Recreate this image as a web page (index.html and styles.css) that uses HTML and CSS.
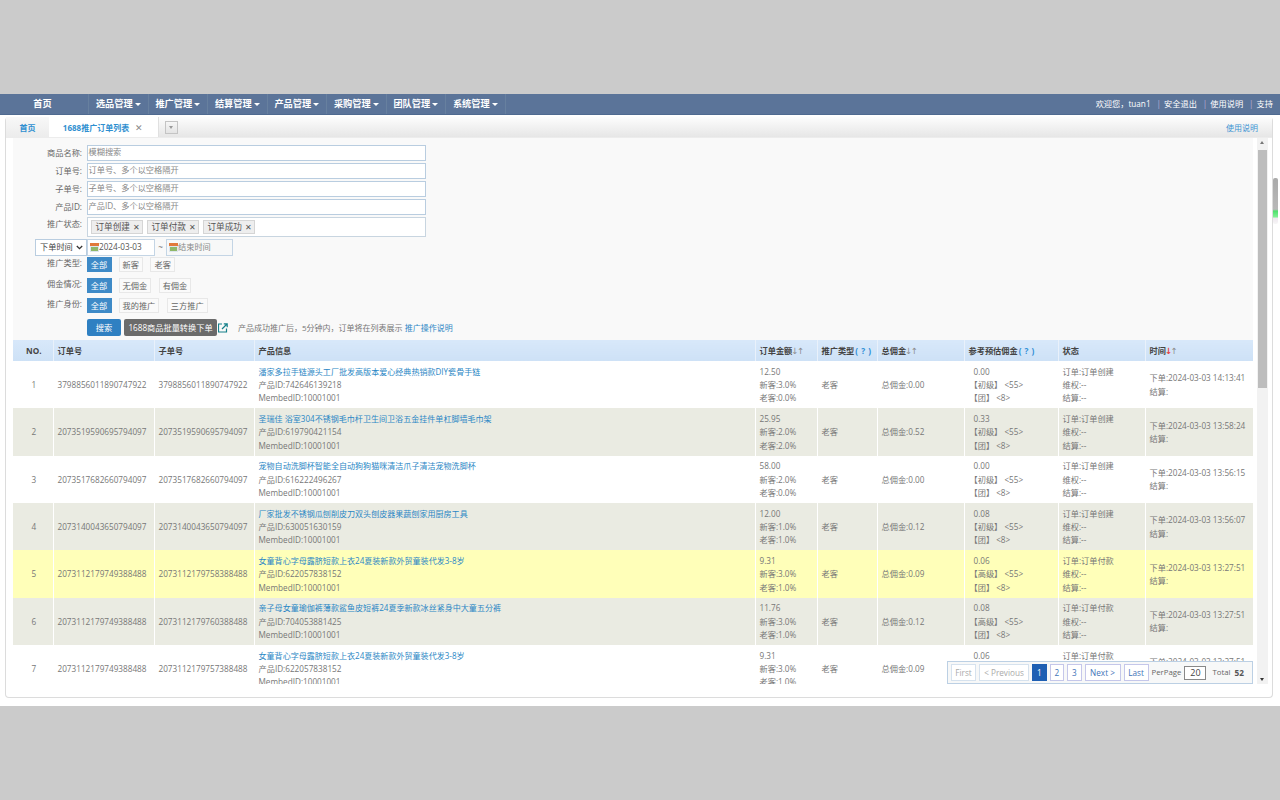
FILE: index.html
```html
<!DOCTYPE html>
<html lang="zh-CN">
<head>
<meta charset="utf-8">
<title>1688推广订单列表</title>
<link rel="stylesheet" href="styles.css">
</head>
<body>
<div class="app">
  <nav class="nav">
    <a class="nav-home">首页</a>
    <a class="nav-item">选品管理<i class="caret"></i></a>
    <a class="nav-item">推广管理<i class="caret"></i></a>
    <a class="nav-item">结算管理<i class="caret"></i></a>
    <a class="nav-item">产品管理<i class="caret"></i></a>
    <a class="nav-item">采购管理<i class="caret"></i></a>
    <a class="nav-item">团队管理<i class="caret"></i></a>
    <a class="nav-item">系统管理<i class="caret"></i></a>
    <div class="nav-right">
      <span>欢迎您，tuan1</span><b>|</b><span>安全退出</span><b>|</b><span>使用说明</span><b>|</b><span>支持</span>
    </div>
  </nav>
  <section class="panel">
    <header class="tabs">
      <a class="tab tab-home">首页</a>
      <a class="tab tab-active">1688推广订单列表<span class="tab-x">✕</span></a>
      <span class="tab-menu"><i></i></span>
      <a class="tab-help">使用说明</a>
    </header>
    <div class="body">
      <div class="main">
        <form class="filter">
          <div class="f-row"><label class="f-label">商品名称:</label><div class="f-input">模糊搜索</div></div>
          <div class="f-row"><label class="f-label">订单号:</label><div class="f-input">订单号、多个以空格隔开</div></div>
          <div class="f-row"><label class="f-label">子单号:</label><div class="f-input">子单号、多个以空格隔开</div></div>
          <div class="f-row"><label class="f-label">产品ID:</label><div class="f-input">产品ID、多个以空格隔开</div></div>
          <div class="f-row"><label class="f-label f-label-top">推广状态:</label>
            <div class="f-multi">
              <span class="chip">订单创建<i>✕</i></span><span class="chip">订单付款<i>✕</i></span><span class="chip">订单成功<i>✕</i></span>
            </div>
          </div>
          <div class="f-row f-date-row">
            <div class="f-select">下单时间<svg width="7" height="5" viewBox="0 0 7 5"><path d="M.8 1l2.7 2.7L6.2 1" fill="none" stroke="#333" stroke-width="1.3"/></svg></div>
            <div class="f-date f-date-a"><svg class="cal" width="9" height="9" viewBox="0 0 9 9"><rect width="9" height="9" fill="#dde6ee"/><rect width="9" height="3" fill="#e2793a"/><rect x="1" y="4" width="7" height="4" fill="#8fb86a"/></svg>2024-03-03</div>
            <span class="tilde">~</span>
            <div class="f-date f-date-b"><svg class="cal" width="9" height="9" viewBox="0 0 9 9"><rect width="9" height="9" fill="#dde6ee"/><rect width="9" height="3" fill="#e2793a"/><rect x="1" y="4" width="7" height="4" fill="#8fb86a"/></svg>结束时间</div>
          </div>
          <div class="f-row f-opt f-opt-1"><label class="f-label f-label-opt">推广类型:</label><span class="opt on">全部</span><span class="opt">新客</span><span class="opt">老客</span></div>
          <div class="f-row f-opt f-opt-2"><label class="f-label f-label-opt">佣金情况:</label><span class="opt on">全部</span><span class="opt">无佣金</span><span class="opt">有佣金</span></div>
          <div class="f-row f-opt f-opt-3"><label class="f-label f-label-opt">推广身份:</label><span class="opt on">全部</span><span class="opt">我的推广</span><span class="opt">三方推广</span></div>
          <div class="f-row f-actions">
            <span class="btn-search">搜索</span>
            <span class="btn-convert">1688商品批量转换下单</span>
            <svg class="ext" width="10" height="10" viewBox="0 0 10 10"><path d="M8.5 5.5v3.5h-8v-8h3.5" fill="none" stroke="#15808a" stroke-width="1.2"/><path d="M4 6l5-5M5.8.8H9.2v3.4" fill="none" stroke="#15808a" stroke-width="1.2"/></svg>
            <span class="hint">产品成功推广后，5分钟内，订单将在列表展示 <a>推广操作说明</a></span>
          </div>
        </form>
        <table class="grid">
          <colgroup><col class="c1"><col class="c2"><col class="c3"><col class="c4"><col class="c5"><col class="c6"><col class="c7"><col class="c8"><col class="c9"><col class="c10"></colgroup>
          <thead>
            <tr>
              <th class="ctr">NO.</th><th>订单号</th><th>子单号</th><th>产品信息</th>
              <th>订单金额<span class="sort">↓↑</span></th>
              <th>推广类型<span class="q">( ? )</span></th>
              <th>总佣金<span class="sort">↓↑</span></th>
              <th class="pl-est">参考预估佣金<span class="q">( ? )</span></th>
              <th>状态</th>
              <th>时间<span class="sort"><em>↓</em>↑</span></th>
            </tr>
          </thead>
          <tbody>
            <tr>
              <td class="ctr">1</td><td>3798856011890747922</td><td>3798856011890747922</td>
              <td><a>潘家多拉手链源头工厂批发高版本爱心经典热销款DIY瓷骨手链</a><br>产品ID:742646139218<br>MembedID:10001001</td>
              <td>12.50<br>新客:3.0%<br>老客:0.0%</td><td>老客</td><td>总佣金:0.00</td>
              <td class="est">0.00<br><span>【初级】 &lt;55&gt;</span><br><span>【团】 &lt;8&gt;</span></td>
              <td>订单:订单创建<br>维权:--<br>结算:--</td><td>下单:2024-03-03 14:13:41<br>结算:</td>
            </tr>
            <tr class="alt">
              <td class="ctr">2</td><td>2073519590695794097</td><td>2073519590695794097</td>
              <td><a>圣瑞佳 浴室304不锈钢毛巾杆卫生间卫浴五金挂件单杠脚墙毛巾架</a><br>产品ID:619790421154<br>MembedID:10001001</td>
              <td>25.95<br>新客:2.0%<br>老客:2.0%</td><td>老客</td><td>总佣金:0.52</td>
              <td class="est">0.33<br><span>【初级】 &lt;55&gt;</span><br><span>【团】 &lt;8&gt;</span></td>
              <td>订单:订单创建<br>维权:--<br>结算:--</td><td>下单:2024-03-03 13:58:24<br>结算:</td>
            </tr>
            <tr>
              <td class="ctr">3</td><td>2073517682660794097</td><td>2073517682660794097</td>
              <td><a>宠物自动洗脚杯智能全自动狗狗猫咪清洁爪子清洁宠物洗脚杯</a><br>产品ID:616222496267<br>MembedID:10001001</td>
              <td>58.00<br>新客:2.0%<br>老客:0.0%</td><td>老客</td><td>总佣金:0.00</td>
              <td class="est">0.00<br><span>【初级】 &lt;55&gt;</span><br><span>【团】 &lt;8&gt;</span></td>
              <td>订单:订单创建<br>维权:--<br>结算:--</td><td>下单:2024-03-03 13:56:15<br>结算:</td>
            </tr>
            <tr class="alt">
              <td class="ctr">4</td><td>2073140043650794097</td><td>2073140043650794097</td>
              <td><a>厂家批发不锈钢瓜刨削皮刀双头刨皮器果蔬刨家用厨房工具</a><br>产品ID:630051630159<br>MembedID:10001001</td>
              <td>12.00<br>新客:1.0%<br>老客:1.0%</td><td>老客</td><td>总佣金:0.12</td>
              <td class="est">0.08<br><span>【初级】 &lt;55&gt;</span><br><span>【团】 &lt;8&gt;</span></td>
              <td>订单:订单创建<br>维权:--<br>结算:--</td><td>下单:2024-03-03 13:56:07<br>结算:</td>
            </tr>
            <tr class="hl">
              <td class="ctr">5</td><td>2073112179749388488</td><td>2073112179758388488</td>
              <td><a>女童背心字母露脐短款上衣24夏装新款外贸童装代发3-8岁</a><br>产品ID:622057838152<br>MembedID:10001001</td>
              <td>9.31<br>新客:3.0%<br>老客:1.0%</td><td>老客</td><td>总佣金:0.09</td>
              <td class="est">0.06<br><span>【高级】 &lt;55&gt;</span><br><span>【团】 &lt;8&gt;</span></td>
              <td>订单:订单付款<br>维权:--<br>结算:--</td><td>下单:2024-03-03 13:27:51<br>结算:</td>
            </tr>
            <tr class="alt">
              <td class="ctr">6</td><td>2073112179749388488</td><td>2073112179760388488</td>
              <td><a>亲子母女童瑜伽裤薄款鲨鱼皮短裤24夏季新款冰丝紧身中大童五分裤</a><br>产品ID:704053881425<br>MembedID:10001001</td>
              <td>11.76<br>新客:3.0%<br>老客:1.0%</td><td>老客</td><td>总佣金:0.12</td>
              <td class="est">0.08<br><span>【高级】 &lt;55&gt;</span><br><span>【团】 &lt;8&gt;</span></td>
              <td>订单:订单付款<br>维权:--<br>结算:--</td><td>下单:2024-03-03 13:27:51<br>结算:</td>
            </tr>
            <tr>
              <td class="ctr">7</td><td>2073112179749388488</td><td>2073112179757388488</td>
              <td><a>女童背心字母露脐短款上衣24夏装新款外贸童装代发3-8岁</a><br>产品ID:622057838152<br>MembedID:10001001</td>
              <td>9.31<br>新客:3.0%<br>老客:1.0%</td><td>老客</td><td>总佣金:0.09</td>
              <td class="est">0.06<br><span>【高级】 &lt;55&gt;</span><br><span>【团】 &lt;8&gt;</span></td>
              <td>订单:订单付款<br>维权:--<br>结算:--</td><td>下单:2024-03-03 13:27:51<br>结算:</td>
            </tr>
          </tbody>
        </table>
      </div>
      <div class="vbar"><i class="up"></i><span class="thumb"></span><i class="down"></i></div>
    </div>
    <div class="pager">
      <a class="pg pg-edge off">First</a><a class="pg pg-prev off">&lt; Previous</a><a class="pg pg-num-btn cur">1</a><a class="pg pg-num-btn">2</a><a class="pg pg-num-btn">3</a><a class="pg pg-next">Next &gt;</a><a class="pg pg-edge">Last</a>
      <span class="pg-text">PerPage</span><span class="pg-size">20</span><span class="pg-text">Total</span><b class="pg-num">52</b>
    </div>
  </section>
  <div class="outer-bar"><span></span></div>
</div>
</body>
</html>
```
FILE: styles.css
```css
* { box-sizing: border-box; }
html, body { margin: 0; height: 100%; }
body {
  background: #cbcbcb;
  overflow: hidden;
  font: 8.2px/13.4px "Open Sans", "Noto Sans CJK SC", sans-serif;
  color: #777;
}
a { color: #2b87c5; text-decoration: none; }
td a { font-size: 8.05px; }
.app {
  position: relative;
  margin-top: 94px;
  height: 612px;
  background: #fff;
}
.nav {
  display: flex;
  align-items: stretch;
  height: 21px;
  background: #5b7499;
  border-bottom: 1px solid #4f6a90;
  color: #fff;
  font-weight: 700;
  font-size: 9.2px;
  line-height: 20px;
}
.nav-home {
  width: 89px;
  text-align: center;
  color: #fff;
  padding-right: 3px;
  border-right: 1px solid #67809f;
}
.nav-item {
  display: flex;
  align-items: center;
  justify-content: center;
  width: 59.5px;
  color: #fff;
  border-right: 1px solid #67809f;
  white-space: nowrap;
}
.caret {
  width: 0;
  height: 0;
  margin-left: 2px;
  border: 3px solid transparent;
  border-top: 3.5px solid #fff;
  border-bottom: 0;
}
.nav-right {
  display: flex;
  margin-left: auto;
  padding-right: 7px;
  font-size: 8.2px;
  font-weight: 400;
}
.nav-right b { font-weight: 400; color: #b9aed6; margin: 0 3px 0 6px; }
.panel {
  position: relative;
  width: 1268px;
  height: 581px;
  margin: 2px 0 0 5px;
  background: #fff;
  border: 1px solid #dcdcdc;
  border-top: 0;
  border-radius: 4px;
}
.tabs {
  display: flex;
  align-items: stretch;
  height: 21px;
  background: linear-gradient(#fdfdfd, #e6e6e6);
  border-bottom: 1px solid #ececec;
}
.tab { font-weight: 700; text-align: center; line-height: 21px; color: #2f8fd0; font-size: 8px; }
.tab-home {
  width: 43px;
  background: linear-gradient(#f8f8f8, #ececec);
}
.tab-active {
  width: 110px;
  padding-right: 1px;
  background: #fff;
  border-right: 1px solid #e0e0e0;
}
.tab-x { margin-left: 6px; font-weight: 400; color: #8a8a8a; font-size: 9px; }
.tab-menu {
  position: relative;
  align-self: center;
  width: 13px;
  height: 13px;
  margin-left: 6px;
  background: linear-gradient(#f6f6f6, #e4e4e4);
  border: 1px solid #c4c4c4;
}
.tab-menu i {
  position: absolute;
  left: 3px;
  top: 4px;
  border: 2.5px solid transparent;
  border-top: 3px solid #999;
  border-bottom: 0;
}
.tab-help { margin-left: auto; margin-right: 14px; line-height: 22px; font-size: 8px; color: #3d93d3; }
.body { display: flex; height: 546px; padding-left: 7px; }
.main {
  width: 1240px;
  height: 546px;
  overflow: hidden;
}
.filter {
  height: 202px;
  padding-top: 7px;
  background: #f9f9f9;
}
.f-row { display: flex; align-items: center; height: 16px; margin-bottom: 2px; }
.f-label {
  width: 73.5px;
  padding-right: 4.5px;
  text-align: right;
  color: #666;
  flex: none;
}
.f-label-top { align-self: flex-start; line-height: 14px; }
.f-input {
  width: 339px;
  height: 16px;
  padding-left: 1px;
  background: #fff;
  border: 1px solid #b9cde0;
  line-height: 12.5px;
  color: #888;
}
.f-row:has(.f-multi) { height: 20px; }
.f-multi {
  display: flex;
  align-items: center;
  gap: 4px;
  width: 339px;
  height: 20px;
  padding-left: 3px;
  background: #fff;
  border: 1px solid #c8d5e0;
}
.chip {
  display: flex;
  align-items: center;
  width: 52px;
  height: 14px;
  padding-left: 4px;
  background: #eee;
  border: 1px solid #d5d5d5;
  line-height: 13px;
  font-size: 8.6px;
  color: #555;
}
.chip i { margin-left: 3px; font-style: normal; font-size: 7.5px; color: #555; }
.f-date-row { padding-left: 22px; height: 17px; margin-bottom: 1px; }
.f-select {
  display: flex;
  align-items: center;
  justify-content: space-between;
  width: 52px;
  height: 17px;
  padding: 0 3px 1px 4px;
  background: #fff;
  border: 1px solid #b9cde0;
  color: #444;
}
.f-date {
  display: flex;
  align-items: center;
  height: 17px;
  padding: 0 0 1px 2px;
  border: 1px solid #c4d5e5;
  background: #fff;
  color: #555;
}
.f-date-a { width: 68px; }
.f-date-b { width: 67px; background: #f7f8f8; color: #888; }
.tilde { width: 11px; text-align: center; color: #777; padding-bottom: 1px; }
.f-opt { height: 15px; }
.f-opt-1 { margin-bottom: 6px; margin-top: 1px; }
.f-opt-2 { margin-bottom: 5px; }
.f-opt-3 { margin-bottom: 6px; }
.f-label-opt { line-height: 11.5px; height: 13px; align-self: flex-start; }
.opt {
  height: 15px;
  margin-right: 7.6px;
  padding: 0 3px;
  background: #fafafa;
  border: 1px solid #e8e8e8;
  line-height: 13px;
  color: #666;
}
.opt.on { width: 25px; margin-right: 7px; padding: 0; background: #3e8ac7; border-color: #3e8ac7; color: #fff; text-align: center; }
.f-actions { height: 17px; margin: 0; padding-left: 74px; }
.btn-search {
  width: 34px;
  height: 17px;
  background: #2f80c2;
  border-radius: 2px;
  color: #fff;
  text-align: center;
  line-height: 17px;
}
.btn-convert {
  width: 93px;
  height: 17px;
  margin-left: 3px;
  background: #6b6b6b;
  border-radius: 2px;
  color: #fff;
  text-align: center;
  line-height: 17px;
}
.ext { margin-left: 1px; }
.hint { margin-left: 10px; color: #777; font-size: 8px; white-space: nowrap; }
.grid {
  width: 1240px;
  table-layout: fixed;
  border-collapse: collapse;
  background: #fff;
}
.c1 { width: 40px; }
.c2 { width: 101px; }
.c3 { width: 100px; }
.c4 { width: 501px; }
.c5 { width: 62px; }
.c6 { width: 60px; }
.c7 { width: 87px; }
.c8 { width: 94px; }
.c9 { width: 87px; }
.c10 { width: 108px; }
th {
  height: 21px;
  padding: 1px 4px 0;
  background: linear-gradient(#d8e8fa, #cde1f6);
  border-right: 1px solid #e9f1fb;
  text-align: left;
  color: #444;
  font-weight: 700;
  white-space: nowrap;
}
td {
  height: 47.35px;
  padding: 0 4px;
  border-right: 1px solid #fff;
  white-space: nowrap;
  vertical-align: middle;
}
.ctr { text-align: center; padding-left: 5px; padding-right: 3px; }
.pl-est { padding-left: 4px; }
.est { padding-left: 9px; }
.est span { margin-left: -4px; }
.alt td { background: #eaebe2; }
.hl td { background: #ffffb9; }
.sort { font-weight: 400; color: #8c8c8c; font-size: 8.5px; font-family: "DejaVu Sans", sans-serif; letter-spacing: -1.5px; margin-left: -1px; }
.sort em { font-style: normal; color: #e8413f; font-weight: 700; }
.q { color: #2f8fd6; word-spacing: 1px; margin-left: 1px; }
.vbar {
  position: relative;
  width: 11px;
  height: 546px;
  margin-left: 4px;
  background: #f2f2f2;
}
.vbar .up, .vbar .down {
  position: absolute;
  left: 3px;
  border: 2.5px solid transparent;
}
.vbar .up { top: 3px; border-bottom: 3px solid #777; border-top: 0; }
.vbar .down { bottom: 3px; border-top: 3px solid #333; border-bottom: 0; }
.thumb {
  position: absolute;
  left: 1px;
  top: 12px;
  width: 9px;
  height: 238px;
  background: #bdbdbd;
}
.pager {
  position: absolute;
  right: 19px;
  top: 544px;
  display: flex;
  align-items: center;
  gap: 3px;
  width: 306px;
  height: 23px;
  padding-left: 3px;
  background: #f7f8f8;
  border: 1px solid #bcd0e4;
  color: #777;
  font-size: 8.2px;
  white-space: nowrap;
}
.pg {
  flex: none;
  height: 17px;
  background: #fff;
  border: 1px solid #c5c7ea;
  line-height: 15px;
  text-align: center;
  color: #3f74b8;
}
.pg-edge { width: 25px; }
.pg-prev { width: 50px; }
.pg-next { width: 36px; }
.pg-num-btn { width: 14.5px; }
.pg.off { border-color: #d6e2ee; color: #aaa; }
.pg.cur { background: #1e5fb3; border-color: #1e5fb3; color: #fff; }
.pg-text { color: #666; font-size: 7.8px; }
.pg-size {
  width: 22px;
  height: 14px;
  margin: 0 3px 0 0;
  background: #fff;
  border: 1px solid #888;
  text-align: center;
  line-height: 12px;
  color: #444;
  font-size: 9px;
}
.pg-num { margin-left: 1px; color: #555; }
.outer-bar {
  position: absolute;
  right: 0;
  top: 84px;
  width: 7px;
  height: 50px;
}
.outer-bar span {
  display: block;
  width: 5px;
  height: 46px;
  border-radius: 2px;
  background: linear-gradient(#aaa 0, #b8b8b8 68%, #4fe06c 72%, #7ef092 84%, #f0e8f0 88%, #f6f6f6 100%);
}
```
